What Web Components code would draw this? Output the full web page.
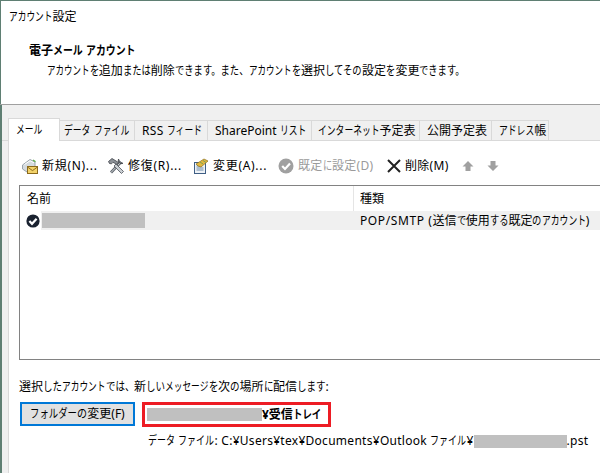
<!DOCTYPE html>
<html lang="ja">
<head>
<meta charset="utf-8">
<title>アカウント設定</title>
<style>
html, body { margin: 0; padding: 0; }
body {
    width: 600px;
    height: 473px;
    overflow: hidden;
    font: 12px/16px "Noto Sans", "Noto Sans CJK JP", sans-serif;
    color: #000;
}
</style>
</head>
<body>
<account-dialog></account-dialog>

<script>
// kana is much narrower than kanji in the reference font, so squeeze those runs
function jp(text, kata = 8.5, hira = 9.3) {
    return text.replace(/[ァ-ヶー]+|[ぁ-ゖ。、]+/g, run => {
        const adv = /[ァ-ヶー]/.test(run) ? kata : hira
        return `<span style="display:inline-block;white-space:nowrap;letter-spacing:0;width:${(run.length * adv).toFixed(1)}px;transform:scaleX(${(adv / 12).toFixed(3)});transform-origin:0 50%">${run}</span>`
    })
}

class blurBlock extends HTMLElement {
    constructor(){
        super()
        this.shadowDOM = this.attachShadow({mode : "open"})
    }
    connectedCallback() {
        const w = this.getAttribute("w")
        const h = this.getAttribute("h") || 15
        this.shadowDOM.innerHTML = `
        <style>
            :host { display: inline-block; flex: none; background: #c0c0c0; width: ${w}px; height: ${h}px; }
        </style>`
    }
}

class dialogHeader extends HTMLElement {
    constructor(){
        super()
        this.shadowDOM = this.attachShadow({mode : "open"})
    }
    connectedCallback() {
        this.shadowDOM.innerHTML = `
        <style>
            :host { display: block; height: 104px; background: #fff; box-sizing: border-box; border-top: 1px solid #5f7f73; border-left: 1px solid #5f7f73; padding: 8px 0 0 8px; }
            p { margin: 0; white-space: nowrap; }
            .head { margin: 18px 0 0 20px; font-weight: 700; }
            .desc { margin: 4px 0 0 38px; }
        </style>
        <p class="title">${jp("アカウント設定", 8.7)}</p>
        <p class="head">${jp("電子メール アカウント", 9.9)}</p>
        <p class="desc">${jp("アカウントを追加または削除できます。また、アカウントを選択してその設定を変更できます。")}</p>
        `
    }
}

class tabStrip extends HTMLElement {
    constructor(){
        super()
        this.shadowDOM = this.attachShadow({mode : "open"})
    }
    connectedCallback() {
        const tabs = [
            ["メール", 52, 7, 0],
            ["データ ファイル", 75, 4, 0],
            ["RSS フィード", 73, 7, .3],
            ["SharePoint リスト", 104, 7, 0],
            ["インターネット予定表", 108, 6, 0],
            ["公開予定表", 72, 7, 0],
            ["アドレス帳", 57, 7, 0]
        ]
        this.shadowDOM.innerHTML = `
        <style>
            :host { display: flex; height: 23px; padding-left: 6px; align-items: flex-end; box-sizing: border-box; background: linear-gradient(#f0f0f0 22px, #d9d9d9 22px); }
            .tab { box-sizing: border-box; height: 21px; border: 1px solid #d9d9d9; border-left: 0; background: #f0f0f0; padding-top: 2px; white-space: nowrap; flex: none; }
            .tab.on { height: 23px; background: #fff; border-left: 1px solid #d9d9d9; border-bottom: 0; padding-top: 3px; }
        </style>
        ${tabs.map((t, i) => `<div class="tab ${i == 0 ? "on" : ""}" style="width:${t[1]}px;padding-left:${t[2]}px;letter-spacing:${t[3]}px">${jp(t[0], 8.8)}</div>`).join("")}
        `
    }
}

class toolItem extends HTMLElement {
    constructor(){
        super()
        this.shadowDOM = this.attachShadow({mode : "open"})
    }
    connectedCallback() {
        this.shadowDOM.innerHTML = `
        <style>
            :host { display: flex; align-items: center; gap: 4px; white-space: nowrap; height: 16px; letter-spacing: .7px; }
            :host(.tight) { letter-spacing: .3px; }
            :host([disabled]) { color: #9a9a9a; }
            ::slotted(svg) { display: block; flex: none; }
        </style>
        <slot name="icon"></slot><span><slot></slot></span>
        `
    }
}

class accountList extends HTMLElement {
    constructor(){
        super()
        this.shadowDOM = this.attachShadow({mode : "open"})
    }
    connectedCallback() {
        this.shadowDOM.innerHTML = `
        <style>
            :host { display: block; box-sizing: border-box; height: 175px; margin-left: 10px; border: 1px solid #828282; border-right: 0; background: #fff; }
            .cols { display: grid; grid-template-columns: 333px 1fr; height: 25px; white-space: nowrap; }
            .cols div { padding: 5px 0 0 7px; }
            .cols div + div { border-left: 1px solid #e5e5e5; padding-left: 6px; }
            .row { display: flex; height: 19px; }
            .check { width: 21px; flex: none; padding: 3px 0 0 6px; box-sizing: border-box; }
            .check svg { display: block; }
            .fill { flex: 1; display: flex; align-items: center; background: #f0f0f0; }
            .name { width: 319px; flex: none; padding-left: 1px; box-sizing: border-box; display: flex; align-items: center; }
            .kind { white-space: nowrap; }
            .kind b { font-weight: 400; letter-spacing: .6px; }
        </style>
        <div class="cols"><div>名前</div><div>種類</div></div>
        <div class="row">
            <div class="check"><svg width="14" height="14" viewBox="0 0 14 14"><circle cx="7" cy="7" r="6.6" fill="#1a2230"/><path d="M3.4 7l2.6 2.8 4.6-5" fill="none" stroke="#fff" stroke-width="2.2"/></svg></div>
            <div class="fill">
                <div class="name"><blur-block w="103"></blur-block></div>
                <div class="kind"><b>POP/SMTP (</b>${jp("送信で使用する既定のアカウント)", 8.8)}</div>
            </div>
        </div>
        `
    }
}

class deliveryInfo extends HTMLElement {
    constructor(){
        super()
        this.shadowDOM = this.attachShadow({mode : "open"})
    }
    connectedCallback() {
        this.shadowDOM.innerHTML = `
        <style>
            :host { display: block; padding: 19px 0 0 10px; white-space: nowrap; }
            .line { display: flex; margin: 7px 0 0 1px; gap: 7px; align-items: flex-start; }
            button { box-sizing: border-box; width: 115px; height: 24px; padding: 0; border: 2px solid #0078d7; background: #e1e1e1; font: inherit; color: #000; white-space: nowrap; }
            .box { box-sizing: border-box; width: 189px; height: 25px; border: 3px solid #ed1c24; padding-left: 2px; display: flex; align-items: center; font-weight: 700; }
            .file { display: flex; align-items: center; margin: 6px 0 0 129px; }
            .file span { letter-spacing: .28px; }
        </style>
        <div class="lead">${jp("選択したアカウントでは、新しいメッセージを次の場所に配信します:", 8.7, 9.5)}</div>
        <div class="line">
            <button>${jp("フォルダーの変更(F)", 9.4, 10)}</button>
            <div class="box"><blur-block w="115" h="13"></blur-block><span>${jp("¥受信トレイ", 9.4)}</span></div>
        </div>
        <div class="file"><span>${jp("データ ファイル: C:¥Users¥tex¥Documents¥Outlook ファイル¥", 9)}</span><blur-block w="93" h="13"></blur-block><span>.pst</span></div>
        `
    }
}

class accountDialog extends HTMLElement {
    constructor(){
        super()
        this.shadowDOM = this.attachShadow({mode : "open"})
    }
    connectedCallback() {
        this.shadowDOM.innerHTML = `
        <style>
            :host { display: block; width: 600px; height: 473px; background: #fff; overflow: hidden; }
            .rule { height: 1px; background: #a0a0a0; }
            .body { height: 368px; background: #f0f0f0; border-left: 2px solid #5f7f73; box-sizing: border-box; padding-top: 13px; display: flex; flex-direction: column; }
            .panel { flex: 1; margin-left: 6px; background: #fff; border-left: 1px solid #d9d9d9; }
            .tools { display: grid; grid-template-columns: 86px 85px 85px 109px 75px 25px 25px; align-items: center; height: 44px; padding: 5px 0 0 13px; box-sizing: border-box; }
        </style>
        <dialog-header></dialog-header>
        <div class="rule"></div>
        <div class="body">
            <tab-strip></tab-strip>
            <div class="panel">
                <div class="tools">
                    <tool-item>
                        <svg slot="icon" width="16" height="16" viewBox="0 0 16 16"><path d="M.5 7 8 1.500l5 2.500v6l-8 4-4.500-3z" fill="#d5dbe0" stroke="#9aa4ac"/><path d="M2.500 6.500 8 2.800l4 2" fill="none" stroke="#fff"/><path d="M11 2l2.500 1.800" stroke="#5fb04a" stroke-width="1.400"/><rect x="5.500" y="8.500" width="10" height="7" fill="#f3d36a" stroke="#8c6a1c"/><path d="M5.500 9 10.500 12.600 15.500 9" fill="none" stroke="#8c6a1c"/></svg>
                        新規(N)...
                    </tool-item>
                    <tool-item>
                        <svg slot="icon" width="16" height="16" viewBox="0 0 16 16"><path d="M3 14.500 13 4" stroke="#5f656c" stroke-width="2.800"/><path d="M3 14.500 13 4" stroke="#d8dde0" stroke-width="1"/><path d="M1.500 5.500.5 3.500 4 .5l6.500 4L9 6.500 5 4.300 3.500 5.800z" fill="#8b9096" stroke="#3f4349" stroke-width=".8"/><path d="M6 8l7.500 7.500 2-2L8 6z" fill="#c9ced2" stroke="#4c5158" stroke-width=".8"/><path d="M10.500 1a3.300 3.300 0 0 0 4.500 4.300l-2-.6-1.500-1.500z" fill="#7b8087" stroke="#3f4349" stroke-width=".8"/></svg>
                        修復(R)...
                    </tool-item>
                    <tool-item>
                        <svg slot="icon" width="16" height="16" viewBox="0 0 16 16"><rect x="1.500" y="4.500" width="11" height="11" fill="#eef2f6" stroke="#3f5f85"/><path d="M3.500 8h5M3.500 10h7M3.500 12h7" stroke="#6d8aa8"/><path d="M3 6 11 1l4 2-7 6-3-1z" fill="#e3b83f" stroke="#8a7020" stroke-width=".7"/><path d="M7 4l3 2M10 2.500l3 2" stroke="#7da05a"/></svg>
                        変更(A)...
                    </tool-item>
                    <tool-item class="tight" disabled>
                        <svg slot="icon" width="16" height="16" viewBox="0 0 16 16"><circle cx="8" cy="8" r="7.500" fill="#a0a0a0"/><path d="M4.200 8l2.800 3 5-5.400" fill="none" stroke="#fff" stroke-width="2.200"/></svg>
                        ${jp("既定に設定(D)")}
                    </tool-item>
                    <tool-item class="tight">
                        <svg slot="icon" width="14" height="16" viewBox="0 0 14 16"><path d="M1 2l12 12M13 2 1 14" stroke="#222" stroke-width="2"/></svg>
                        削除(M)
                    </tool-item>
                    <tool-item>
                        <svg slot="icon" width="12" height="12" viewBox="0 0 12 12"><path d="M6 1l5.500 5.500H8.500V11h-5V6.500H.5z" fill="#a0a0a0"/></svg>
                    </tool-item>
                    <tool-item>
                        <svg slot="icon" width="12" height="12" viewBox="0 0 12 12"><path d="M6 11 11.500 5.500H8.500V1h-5v4.500H.5z" fill="#a0a0a0"/></svg>
                    </tool-item>
                </div>
                <account-list></account-list>
                <delivery-info></delivery-info>
            </div>
        </div>
        `
    }
}

customElements.define("blur-block", blurBlock)
customElements.define("dialog-header", dialogHeader)
customElements.define("tab-strip", tabStrip)
customElements.define("tool-item", toolItem)
customElements.define("account-list", accountList)
customElements.define("delivery-info", deliveryInfo)
customElements.define("account-dialog", accountDialog)
</script>
</body>
</html>
